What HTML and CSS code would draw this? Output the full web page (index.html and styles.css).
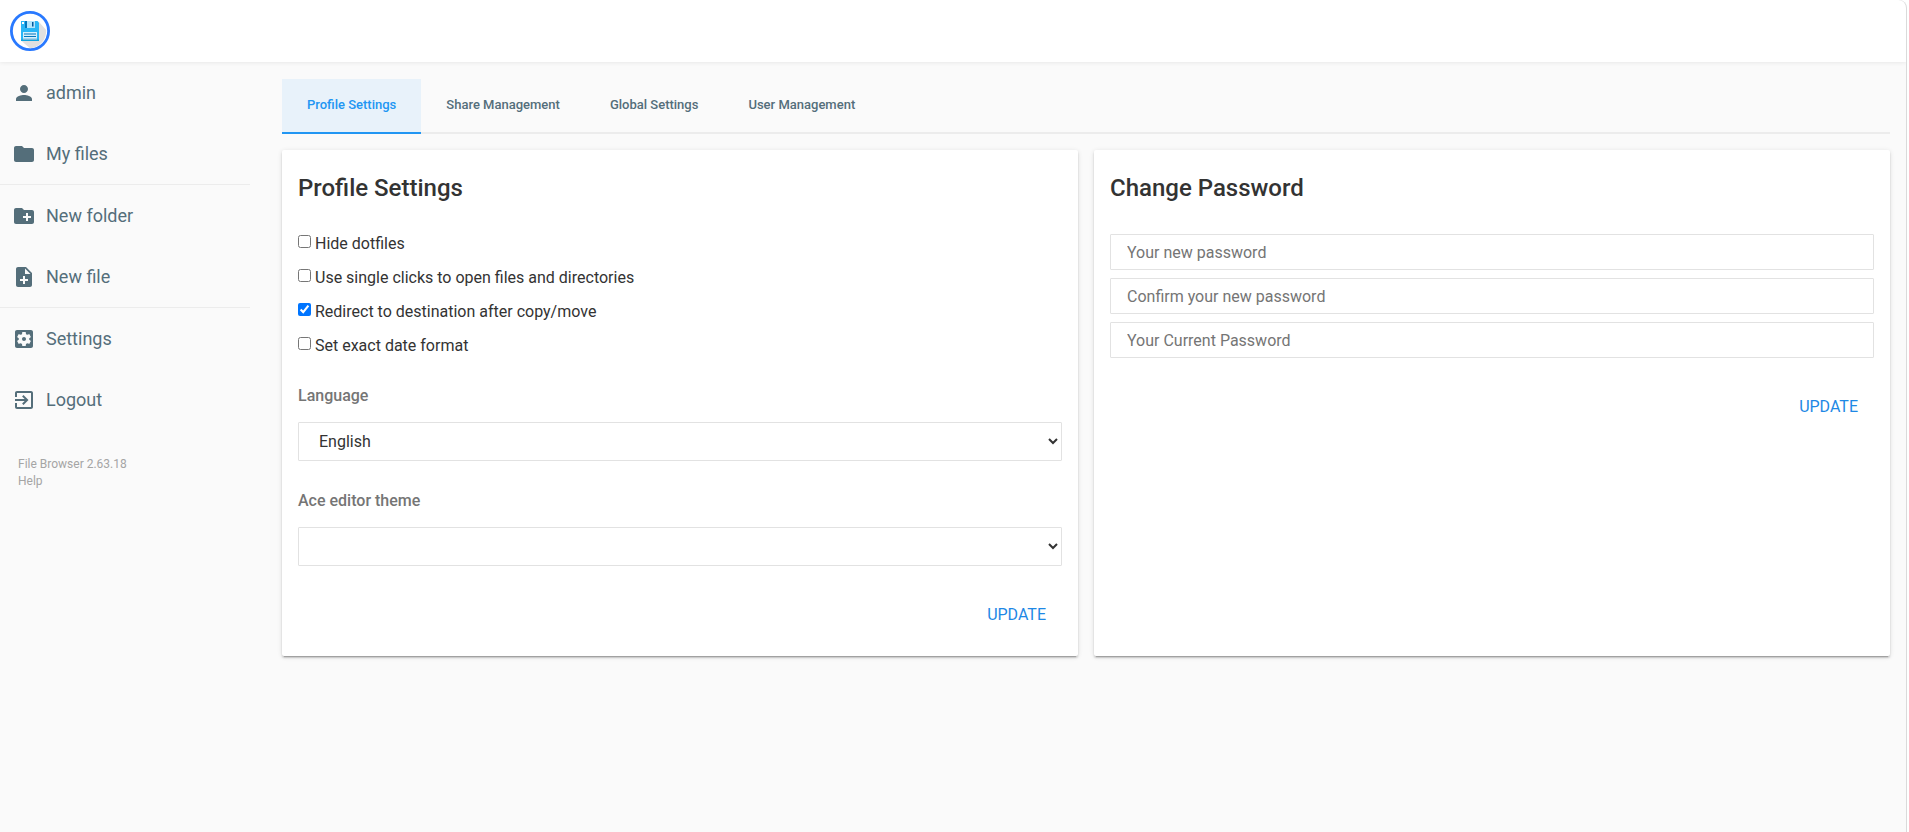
FILE: index.html
```html
<!DOCTYPE html>
<html lang="en">
<head>
  <meta charset="UTF-8">
  <meta name="viewport" content="width=device-width, initial-scale=1">
  <title>Settings - File Browser</title>
  <link rel="stylesheet" href="styles.css">
</head>
<body>
  <header>
    <svg class="logo" viewBox="0 0 40 40" aria-label="File Browser" role="img">
      <circle cx="20" cy="20" r="18.6" fill="#fff" stroke="#2979ff" stroke-width="2.8"/>
      <path d="M29 11l7.2 8A17.2 17.2 0 0 1 20 37.2L11.500 30z" fill="#e0e0e0"/>
      <path d="M11 10h16.500l1.500 1.500V30H11z" fill="#29b6f6"/>
      <path d="M11 28.500h18V30H11z" fill="#0fa4e0"/>
      <path d="M12 11h2v2h-2z" fill="#fff"/>
      <path d="M15 10h2v7h-2z" fill="#0277bd"/>
      <path d="M17 10h8v7h-8z" fill="#b3e5fc"/>
      <path d="M22 11h1.500v4.500H22z" fill="#01579b"/>
      <path d="M13 21h14v8H13z" fill="#d5f0fc"/>
      <path d="M14 22.500h12v1H14zM14 25h12v1H14z" fill="#0277bd"/>
      <path d="M13 27.500h14V29H13z" fill="#78b9dc"/>
    </svg>
  </header>

  <div class="layout">
    <nav>
      <div class="group">
        <button class="action">
          <svg viewBox="0 0 24 24"><path d="M12 12c2.210 0 4-1.790 4-4s-1.790-4-4-4-4 1.790-4 4 1.790 4 4 4zm0 2c-2.670 0-8 1.340-8 4v2h16v-2c0-2.660-5.330-4-8-4z"/></svg>
          <span>admin</span>
        </button>
        <button class="action">
          <svg viewBox="0 0 24 24"><path d="M10 4H4c-1.100 0-1.990.9-1.990 2L2 18c0 1.100.9 2 2 2h16c1.100 0 2-.9 2-2V8c0-1.100-.9-2-2-2h-8l-2-2z"/></svg>
          <span>My files</span>
        </button>
      </div>
      <div class="group">
        <button class="action">
          <svg viewBox="0 0 24 24"><path d="M20 6h-8l-2-2H4c-1.110 0-1.990.89-1.990 2L2 18c0 1.110.89 2 2 2h16c1.110 0 2-.89 2-2V8c0-1.110-.89-2-2-2zm-1 8h-3v3h-2v-3h-3v-2h3V9h2v3h3v2z"/></svg>
          <span>New folder</span>
        </button>
        <button class="action">
          <svg viewBox="0 0 24 24"><path d="M14 2H6c-1.100 0-1.990.9-1.990 2L4 20c0 1.100.89 2 1.990 2H18c1.100 0 2-.9 2-2V8l-6-6zm2 14h-3v3h-2v-3H8v-2h3v-3h2v3h3v2zm-3-7V3.500L18.500 9H13z"/></svg>
          <span>New file</span>
        </button>
      </div>
      <div class="group">
        <button class="action">
          <svg viewBox="0 0 24 24"><path d="M12 10c-1.100 0-2 .9-2 2s.9 2 2 2 2-.9 2-2-.9-2-2-2zm7-7H5c-1.110 0-2 .9-2 2v14c0 1.100.89 2 2 2h14c1.110 0 2-.9 2-2V5c0-1.100-.89-2-2-2zm-1.750 9c0 .23-.02.46-.05.68l1.480 1.160c.13.11.17.3.08.45l-1.400 2.420c-.09.15-.27.21-.43.15l-1.740-.7c-.36.28-.76.51-1.180.69l-.26 1.850c-.03.17-.18.3-.35.3h-2.800c-.17 0-.32-.13-.35-.29l-.26-1.850c-.43-.18-.82-.41-1.180-.69l-1.740.7c-.16.06-.34 0-.43-.15l-1.400-2.420c-.09-.15-.05-.34.08-.45l1.480-1.160c-.03-.23-.05-.46-.05-.69s.02-.46.05-.68l-1.480-1.160c-.13-.11-.17-.3-.08-.45l1.400-2.420c.09-.15.27-.21.43-.15l1.740.7c.36-.28.76-.51 1.180-.69l.26-1.850c.03-.17.18-.3.35-.3h2.800c.17 0 .32.13.35.29l.26 1.850c.43.18.82.41 1.180.69l1.740-.7c.16-.06.34 0 .43.15l1.400 2.420c.09.15.05.34-.08.45l-1.480 1.160c.03.23.05.46.05.69z"/></svg>
          <span>Settings</span>
        </button>
        <button class="action">
          <svg viewBox="0 0 24 24"><path d="M10.090 15.590L11.500 17l5-5-5-5-1.410 1.410L12.670 11H3v2h9.670l-2.580 2.590zM19 3H5c-1.110 0-2 .9-2 2v4h2V5h14v14H5v-4H3v4c0 1.100.89 2 2 2h14c1.100 0 2-.9 2-2V5c0-1.100-.9-2-2-2z"/></svg>
          <span>Logout</span>
        </button>
      </div>
      <p class="credits">
        <a href="#">File Browser 2.63.18</a>
        <a href="#">Help</a>
      </p>
    </nav>

    <main>
      <div class="tabs">
        <a href="#" class="active">Profile Settings</a>
        <a href="#">Share Management</a>
        <a href="#">Global Settings</a>
        <a href="#">User Management</a>
      </div>

      <div class="cards">
        <form class="card">
          <h2>Profile Settings</h2>
          <label class="check"><input type="checkbox">Hide dotfiles</label>
          <label class="check"><input type="checkbox">Use single clicks to open files and directories</label>
          <label class="check"><input type="checkbox" checked>Redirect to destination after copy/move</label>
          <label class="check"><input type="checkbox">Set exact date format</label>

          <label class="heading" for="language">Language</label>
          <select class="input" id="language">
            <option>English</option>
          </select>

          <label class="heading" for="theme">Ace editor theme</label>
          <select class="input" id="theme">
            <option></option>
          </select>

          <div class="card-action">
            <button type="button">Update</button>
          </div>
        </form>

        <form class="card">
          <h2>Change Password</h2>
          <div class="passwords">
            <input class="input" type="password" placeholder="Your new password" aria-label="Your new password">
            <input class="input" type="password" placeholder="Confirm your new password" aria-label="Confirm your new password">
            <input class="input" type="password" placeholder="Your Current Password" aria-label="Your Current Password">
          </div>
          <div class="card-action">
            <button type="button">Update</button>
          </div>
        </form>
      </div>
    </main>
  </div>
</body>
</html>
```
FILE: styles.css
```css
* { box-sizing: border-box; }
html { background: #fff; }
body {
  font-family: Roboto, sans-serif;
  font-size: 16px;
  color: #333;
  background: #fafafa;
  margin: 0 2px 0 0;
  min-height: 100vh;
  border-right: 1px solid #dadada;
  border-top-right-radius: 8px;
}
button { font: inherit; background: none; border: 0; cursor: pointer; }
a { color: inherit; text-decoration: none; }

header {
  display: flex;
  align-items: center;
  height: 62px;
  padding: 0 10px;
  background: #fff;
  border-top-right-radius: 8px;
  box-shadow: 0 0 5px rgba(0, 0, 0, 0.1);
}
.logo { width: 40px; height: 40px; }

.layout { display: flex; }

/* Sidebar */
nav { width: 250px; flex-shrink: 0; }
.group { border-bottom: 1px solid #ececec; }
.group:nth-child(3) { border-bottom: 0; }
.action {
  display: flex;
  align-items: center;
  gap: 10px;
  width: 100%;
  height: 61px;
  padding: 0 12px;
  font-size: 18px;
  color: #546e7a;
}
.action svg { width: 24px; height: 24px; fill: currentColor; }
.credits {
  margin: 26px 18px;
  font-size: 12px;
  line-height: 17px;
  color: #a5a5a5;
}
.credits a { display: block; }

/* Tabs */
main { flex: 1; margin-left: 32px; padding: 17px 16px 16px 0; }
.tabs { display: flex; border-bottom: 2px solid #ececec; }
.tabs a {
  padding: 17px 25px 19px;
  margin-bottom: -2px;
  font-size: 13px;
  line-height: 17px;
  font-weight: 500;
  color: #546e7a;
  border-bottom: 2px solid transparent;
}
.tabs .active { color: #2196f3; background: #e8f2fa; border-color: #2196f3; }

/* Cards */
.cards { display: grid; grid-template-columns: 1fr 1fr; gap: 16px; margin-top: 16px; }
.card {
  padding: 24px 16px;
  background: #fff;
  border-radius: 2px;
  box-shadow: 0 2px 2px 0 rgba(0, 0, 0, 0.14), 0 1px 5px 0 rgba(0, 0, 0, 0.12), 0 3px 1px -2px rgba(0, 0, 0, 0.2);
}
h2 { margin: 0 0 32px; font-size: 24px; line-height: 28px; font-weight: 500; }
.check { display: flex; align-items: center; margin-bottom: 14px; line-height: 20px; }
.check input { margin: 0 4px 5px 0; }
.heading {
  display: block;
  margin: 30px 0 16px;
  line-height: 20px;
  font-weight: 500;
  color: #757575;
}
.input {
  display: block;
  width: 100%;
  height: 36px;
  padding: 0 16px;
  font: inherit;
  color: inherit;
  background: #fff;
  border: 1px solid #e2e2e2;
  border-radius: 1px;
}
.input::placeholder { color: #757575; }
select.input { height: 39px; padding-right: 0; }
.passwords { display: grid; gap: 8px; }
.card-action { display: flex; justify-content: flex-end; margin-top: 30px; }
.card-action button {
  height: 36px;
  padding: 0 16px;
  color: #1e88e5;
  text-transform: uppercase;
}
```
